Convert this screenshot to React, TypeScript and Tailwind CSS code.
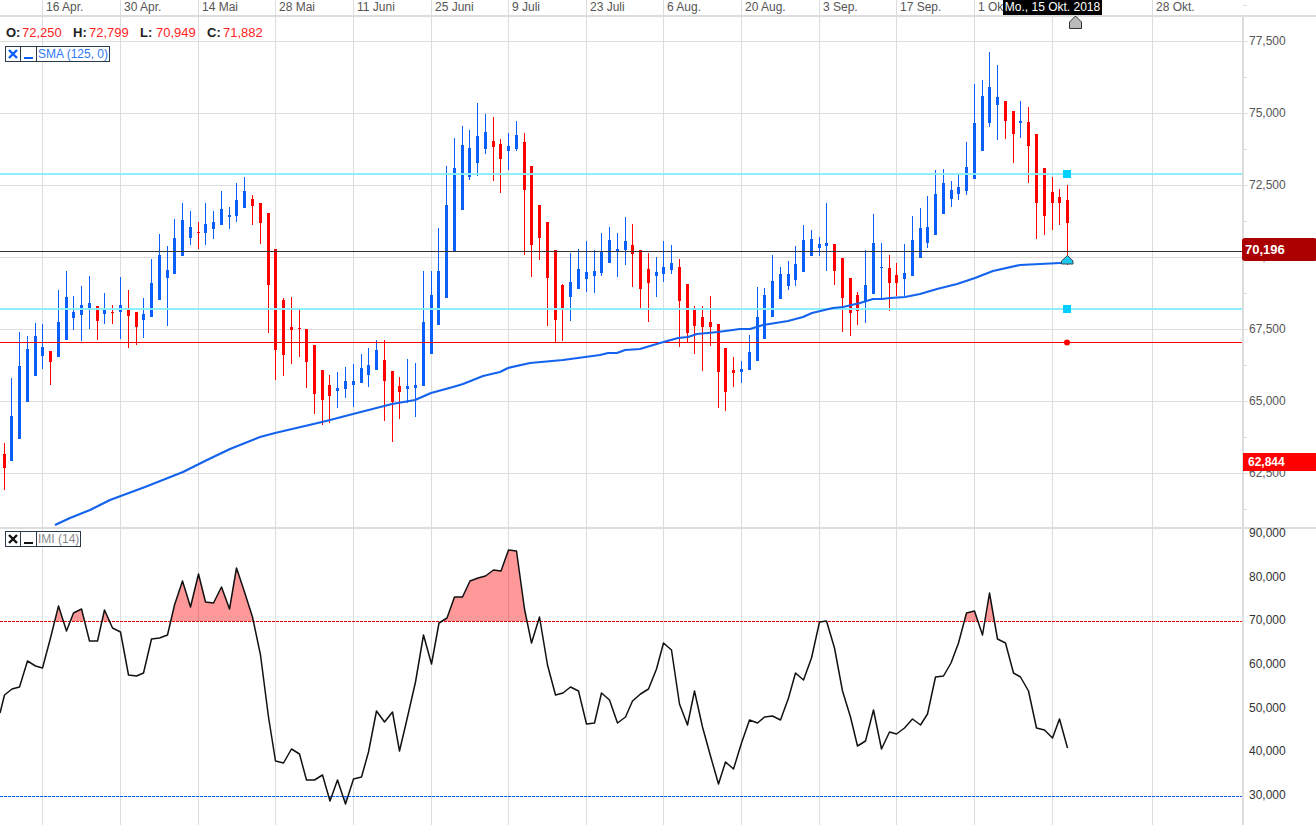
const dates: [string, string][] = [
  ["16 Apr.", "w-[78px]"],
  ["30 Apr.", "w-[78px]"],
  ["14 Mai", "w-[77px]"],
  ["28 Mai", "w-[78px]"],
  ["11 Juni", "w-[78px]"],
  ["25 Juni", "w-[77px]"],
  ["9 Juli", "w-[78px]"],
  ["23 Juli", "w-[77px]"],
  ["6 Aug.", "w-[78px]"],
  ["20 Aug.", "w-[78px]"],
  ["3 Sep.", "w-[77px]"],
  ["17 Sep.", "w-[78px]"],
  ["1 Okt.", "w-[78px]"],
  ["", "w-[100px]"],
  ["28 Okt.", "w-[91px]"],
];

const gridX = [42, 120, 198, 275, 353, 431, 508, 586, 663, 741, 819, 896, 974, 1052, 1152];
const gridY = [41, 113, 185, 257, 329, 401, 473];

// x, high, body top, body bottom, low, up
type Candle = [number, number, number, number, number, number];
const candles: Candle[] = [
  [4, 443, 454, 468, 490, 0], [11, 378, 416, 461, 461, 1], [19, 332, 366, 439, 439, 1], [27, 336, 349, 402, 402, 1],
  [35, 323, 336, 376, 376, 1], [42, 324, 347, 356, 369, 1], [50, 351, 351, 362, 385, 0], [58, 290, 322, 357, 357, 1],
  [66, 271, 297, 340, 340, 1], [73, 296, 312, 318, 330, 1], [81, 286, 305, 315, 341, 1], [89, 276, 303, 310, 329, 1],
  [97, 306, 306, 321, 340, 0], [104, 293, 309, 314, 324, 1], [112, 305, 312, 313, 324, 0], [120, 277, 305, 312, 339, 1],
  [128, 290, 309, 316, 348, 0], [136, 312, 312, 327, 345, 0], [143, 298, 314, 320, 338, 1], [151, 259, 283, 317, 317, 1],
  [159, 234, 255, 300, 300, 1], [167, 246, 270, 278, 326, 1], [174, 219, 238, 274, 274, 1], [182, 203, 220, 256, 256, 1],
  [190, 211, 227, 238, 245, 1], [198, 222, 232, 233, 249, 0], [205, 203, 224, 233, 245, 1], [213, 211, 222, 229, 239, 1],
  [221, 191, 209, 225, 225, 1], [229, 207, 215, 217, 229, 1], [236, 183, 200, 216, 222, 1], [244, 177, 191, 208, 208, 1],
  [252, 195, 199, 206, 225, 0], [260, 203, 203, 223, 244, 0], [268, 213, 213, 285, 333, 0], [275, 249, 249, 350, 380, 0],
  [283, 298, 300, 355, 376, 0], [291, 297, 327, 330, 364, 0], [299, 309, 328, 329, 357, 0], [306, 329, 329, 362, 388, 0],
  [314, 345, 345, 394, 414, 0], [322, 370, 370, 400, 425, 0], [329, 375, 385, 396, 423, 0], [337, 372, 388, 391, 408, 1],
  [345, 367, 381, 389, 398, 1], [353, 364, 381, 385, 407, 1], [361, 354, 368, 383, 383, 1], [368, 348, 365, 375, 387, 1],
  [376, 340, 350, 370, 370, 1], [384, 340, 360, 381, 421, 0], [392, 371, 371, 402, 442, 0], [399, 377, 386, 392, 419, 0],
  [407, 359, 386, 389, 403, 1], [415, 363, 385, 388, 417, 1], [423, 271, 322, 386, 386, 1], [431, 271, 295, 354, 354, 1],
  [438, 228, 271, 325, 325, 1], [446, 166, 205, 298, 298, 1], [454, 138, 168, 251, 251, 1], [462, 126, 145, 210, 210, 1],
  [469, 130, 148, 177, 180, 1], [477, 103, 136, 163, 176, 1], [485, 114, 132, 149, 154, 1], [493, 117, 141, 147, 181, 0],
  [500, 139, 144, 159, 193, 0], [508, 133, 146, 151, 170, 1], [516, 121, 135, 149, 151, 1], [524, 133, 142, 190, 255, 0],
  [531, 166, 166, 245, 277, 0], [539, 205, 205, 238, 260, 0], [547, 222, 222, 278, 326, 0], [555, 250, 250, 320, 343, 0],
  [562, 284, 285, 308, 341, 0], [570, 253, 282, 297, 321, 1], [578, 249, 269, 289, 289, 1], [586, 241, 272, 279, 292, 1],
  [594, 250, 271, 276, 293, 1], [601, 233, 252, 273, 276, 1], [609, 227, 240, 263, 263, 1], [617, 233, 249, 252, 277, 1],
  [625, 217, 241, 250, 265, 1], [632, 224, 245, 254, 287, 0], [640, 250, 250, 289, 310, 0], [648, 253, 269, 283, 322, 0],
  [656, 257, 272, 276, 297, 1], [663, 241, 267, 274, 282, 1], [671, 245, 263, 270, 274, 1], [679, 259, 267, 301, 347, 0],
  [687, 284, 284, 333, 342, 0], [694, 306, 308, 326, 354, 0], [702, 306, 317, 327, 371, 0], [710, 296, 322, 327, 346, 0],
  [718, 324, 324, 372, 408, 0], [725, 348, 348, 392, 411, 0], [733, 357, 370, 373, 387, 0], [741, 361, 369, 372, 383, 1],
  [749, 335, 352, 370, 370, 1], [757, 287, 317, 361, 361, 1], [764, 288, 295, 339, 339, 1], [772, 255, 281, 317, 317, 1],
  [780, 267, 274, 299, 299, 1], [788, 261, 274, 286, 290, 1], [795, 246, 264, 280, 286, 1], [803, 225, 240, 272, 272, 1],
  [811, 230, 239, 256, 256, 1], [819, 237, 244, 248, 256, 1], [826, 203, 243, 246, 271, 1], [834, 244, 244, 271, 285, 0],
  [842, 258, 258, 298, 332, 0], [850, 278, 278, 313, 336, 0], [857, 292, 295, 311, 325, 0], [865, 250, 285, 302, 323, 1],
  [873, 214, 243, 294, 294, 1], [881, 243, 267, 268, 300, 1], [889, 255, 268, 283, 311, 0], [896, 263, 275, 283, 296, 0],
  [904, 244, 273, 279, 296, 1], [912, 216, 240, 276, 276, 1], [920, 208, 228, 258, 258, 1], [927, 196, 227, 243, 248, 1],
  [935, 170, 194, 235, 235, 1], [943, 169, 183, 214, 214, 1], [951, 181, 190, 199, 207, 1], [958, 174, 187, 194, 200, 1],
  [966, 142, 167, 191, 195, 1], [974, 84, 123, 179, 179, 1], [982, 80, 96, 151, 151, 1], [989, 52, 87, 123, 127, 1],
  [997, 65, 97, 105, 140, 1], [1005, 101, 101, 121, 139, 0], [1013, 111, 111, 134, 163, 0], [1020, 101, 121, 123, 138, 1],
  [1028, 107, 122, 146, 183, 0], [1036, 134, 134, 203, 239, 0], [1044, 168, 168, 216, 235, 0], [1052, 177, 192, 203, 230, 0],
  [1059, 189, 197, 203, 225, 0], [1067, 185, 200, 223, 265, 0],
];

const sma =
  "55,525 70,518 90,510 110,500 145,487 183,472 207,460 230,449 260,437 275,433 322,422 330,420 353,414 392,404 415,400 431,393 453,387 463,384 483,376 500,372 508,368 530,363 563,360 600,355 608,353 617,353 625,350 640,349 660,343 678,338 688,337 697,334 718,332 740,329 750,329 763,325 788,321 803,317 812,313 833,308 843,307 860,303 873,299 882,299 890,298 905,297 920,294 937,289 957,284 975,278 993,271 1020,265 1040,264 1060,263 1067,263";

const imi =
  "0,713 4.5,695 12,689 19.5,687 27.5,661 35.5,666 42.5,668 50.5,638 58.5,606 66.5,631 73.5,613 81.5,609 89.5,641 97.5,641 104.5,610 112.5,628 120.5,632 128.5,675 136.5,676 143.5,673 151.5,639 159.5,638 167.5,635 174.5,605 182.5,581 190.5,607 198.5,574 205.5,602 213.5,603 221.5,587 229.5,609 236.5,568 244.5,592 252.5,617 260.5,655 268.5,717 275.5,761 283.5,763 291.5,749 299.5,754 306.5,780 314.5,780 322.5,775 330,801 337.5,780 345.5,804 353.5,779 361.5,777 368.5,752 376.5,711 384.5,722 392.5,712 399.5,751 407.5,717 415.5,682 423.5,635 431.5,664 439,623 447,618 454.5,597 462.5,597 470,581 478,578 485.5,576 493.5,570 501,571 508.5,550 516.5,551 524.5,609 531.5,643 539.5,617 547.5,665 555.5,695 563,693 570.5,687 578.5,691 586.5,724 594.5,723 601.5,693 609.5,700 617.5,723 625.5,717 632.5,701 640.5,694 648.5,689 656.5,669 663.5,643 671.5,650 679.5,704 687.5,725 694.5,691 702.5,727 710.5,756 718.5,784 725.5,762 733.5,769 741.5,743 749.5,720 757.5,723 764.5,717 772.5,716 780.5,720 788.5,698 795.5,673 803.5,680 811.5,658 819.5,622 826.5,621 834.5,648 842.5,691 850.5,717 857.5,746 865.5,741 873.5,710 881.5,749 889.5,732 896.5,734 904.5,728 912.5,719 920.5,725 927.5,714 935.5,677 943.5,676 951,663 958.5,643 966.5,613 974.5,611 982.5,635 989.5,593 997.5,639 1005.5,643 1013.5,673 1020.5,677 1028.5,691 1036.5,728 1044.5,730 1052.5,738 1059.5,719 1067.5,748";

const priceLabels = ["77,500", "75,000", "72,500", "70,000", "67,500", "65,000", "62,500"];
const imiLabels = ["90,000", "80,000", "70,000", "60,000", "50,000", "40,000", "30,000"];

function Legend({ label, accent, className }: { label: string; accent: string; className: string }) {
  return (
    <div className={`absolute left-[5px] flex h-4 text-[12px] leading-[14px] whitespace-nowrap ${className}`}>
      <div className="flex h-4 w-[16px] items-center justify-center border border-[#2b3a4a] bg-white">
        <svg width="12" height="12" viewBox="0 0 12 12">
          <path d="M2 2 L10 10 M10 2 L2 10" stroke={accent} strokeWidth="2.4" fill="none" />
        </svg>
      </div>
      <div className="flex h-4 w-[16px] items-end justify-center border border-l-0 border-[#2b3a4a] bg-white pb-[2px]">
        <div className="h-[2px] w-[9px]" style={{ backgroundColor: accent }} />
      </div>
      <div className="-ml-px h-4 border border-[#2b3a4a] bg-white pr-px pl-px">{label}</div>
    </div>
  );
}

function Grid({ from, to, rows }: { from: number; to: number; rows: number[] }) {
  return (
    <g fill="#dddddd" shapeRendering="crispEdges">
      {rows.map((y) => (
        <rect key={y} x="0" y={y} width="1242" height="1" />
      ))}
      {gridX.map((x) => (
        <rect key={x} x={x} y={from} width="1" height={to - from} />
      ))}
    </g>
  );
}

function PriceChart() {
  return (
    <svg width="1242" height="510" viewBox="0 17 1242 510" className="block">
      <Grid from={17} to={527} rows={gridY} />
      <g shapeRendering="crispEdges">
        {candles.map(([x, hi, top, bot, lo, up]) => (
          <g key={x} fill={up ? "#0a5ffb" : "#ff0000"}>
            <rect x={x} y={hi} width="1" height={lo - hi} />
            <rect x={x - 1} y={top} width="3" height={Math.max(bot - top, 1)} />
          </g>
        ))}
        <rect x="0" y="173" width="1242" height="2" fill="#88eeff" fillOpacity="0.95" />
        <rect x="0" y="308" width="1242" height="2" fill="#88eeff" fillOpacity="0.95" />
        <rect x="0" y="251" width="1242" height="1" fill="#333333" />
        <rect x="0" y="342" width="1242" height="1" fill="#ff0000" />
      </g>
      <polyline points={sma} fill="none" stroke="#1463ee" strokeWidth="2.2" strokeLinejoin="round" />
      <rect x="1063" y="170" width="8" height="8" fill="#00d0ff" shapeRendering="crispEdges" />
      <rect x="1063" y="305" width="8" height="8" fill="#00d0ff" shapeRendering="crispEdges" />
      <circle cx="1067" cy="342.5" r="3" fill="#ff0000" />
      <path d="M1067.5 255.5 L1073 261 L1073 264 L1061.5 264 L1061.5 261 Z" fill="#1cc8f0" stroke="#3a4a50" strokeWidth="1" />
    </svg>
  );
}

function ImiChart() {
  const closed = `${imi} 1067.5,621 0,621`;
  const closedLow = `${imi} 1067.5,796.5 0,796.5`;
  return (
    <svg width="1242" height="296" viewBox="0 529 1242 296" className="block">
      <defs>
        <clipPath id="over">
          <rect x="0" y="529" width="1242" height="92" />
        </clipPath>
        <clipPath id="under">
          <rect x="0" y="796" width="1242" height="29" />
        </clipPath>
      </defs>
      <Grid from={529} to={825} rows={[]} />
      <polygon points={closed} fill="#ff0000" fillOpacity="0.4" clipPath="url(#over)" />
      <polygon points={closedLow} fill="#0a5ffb" fillOpacity="0.4" clipPath="url(#under)" />
      <g strokeWidth="1" strokeDasharray="3 1" shapeRendering="crispEdges">
        <line x1="0" y1="621.5" x2="1242" y2="621.5" stroke="#e00000" />
        <line x1="0" y1="796.5" x2="1242" y2="796.5" stroke="#0a5ffb" />
      </g>
      <polyline points={imi} fill="none" stroke="#111111" strokeWidth="1.5" strokeLinejoin="round" />
    </svg>
  );
}

export default function App() {
  return (
    <div className="relative h-[831px] w-[1316px] overflow-hidden bg-white font-['Liberation_Sans',Arial,sans-serif]">
      {/* Date strip */}
      <div className="flex h-[17px] border-b-2 border-[#dddddd] pl-[42px]">
        {dates.map(([label, width], i) => (
          <div key={i} className={`h-[15px] border-l border-[#dddddd] pl-[3px] text-[12px] leading-[15px] whitespace-nowrap text-[#555555] ${width}`}>
            {label}
          </div>
        ))}
        <div className="mt-[5px] h-px w-[4px] bg-[#dddddd]" />
      </div>
      <div className="absolute top-0 left-[1003px] h-[15px] w-[99px] bg-black text-center text-[12px] leading-[14px] text-white">
        Mo., 15 Okt. 2018
      </div>
      <svg className="absolute top-[15px] left-[1068px]" width="15" height="15" viewBox="0 0 15 15">
        <path d="M7.5 1 L13.5 7 L13.5 13.5 L1.5 13.5 L1.5 7 Z" fill="#bbbbbb" stroke="#333333" strokeWidth="1" />
      </svg>

      {/* Price panel */}
      <div className="flex h-[510px]">
        <div className="relative w-[1242px]">
          <PriceChart />
          <div className="absolute top-[8px] left-[6px] flex text-[13px] leading-[15px]">
            {[
              ["O:", "72,250"],
              ["H:", "72,799"],
              ["L:", "70,949"],
              ["C:", "71,882"],
            ].map(([k, v]) => (
              <div key={k} className="flex w-[67px]">
                <span className="w-4 font-bold text-[#222222]">{k}</span>
                <span className="text-[#ff2222]">{v}</span>
              </div>
            ))}
          </div>
          <Legend label="SMA (125, 0)" accent="#0a5ffb" className="top-[29px] text-[#2f78f0]" />
        </div>
        <div className="relative flex-1 border-l-2 border-[#dddddd] pt-[17px]">
          {priceLabels.map((p) => (
            <div key={p} className="h-[72px]">
              <div className="flex h-[14px] items-center gap-[1px] text-[12px] leading-[14px] text-[#555555]">
                <span className="h-px w-[4px] bg-[#dddddd]" />
                {p}
              </div>
              <div className="mt-[29px] h-px w-[3px] bg-[#dddddd]" />
            </div>
          ))}
          <div className="absolute top-[221px] left-[-2px] h-[23px] w-[75px] rounded-[3px] bg-[#aa0000] pl-[3px] text-[13px] leading-[23px] font-bold text-white">
            70,196
          </div>
          <div className="absolute top-[436px] left-[-1px] h-[18px] w-[74px] bg-[#ff0000] pl-[5px] text-[12px] leading-[18px] font-bold text-white">
            62,844
          </div>
        </div>
      </div>

      <div className="h-[2px] bg-[#dddddd]" />

      {/* IMI panel */}
      <div className="flex h-[296px]">
        <div className="relative w-[1242px]">
          <ImiChart />
          <Legend label="IMI (14)" accent="#111111" className="top-[2px] text-[#888888]" />
        </div>
        <div className="relative z-10 flex-1 border-l-2 border-[#dddddd] pl-[5px]">
          <div className="-mt-[3px]">
            {imiLabels.map((p) => (
              <div key={p} className="h-[43.65px] text-[12px] leading-[14px] text-[#333333]">
                {p}
              </div>
            ))}
          </div>
        </div>
      </div>
    </div>
  );
}
